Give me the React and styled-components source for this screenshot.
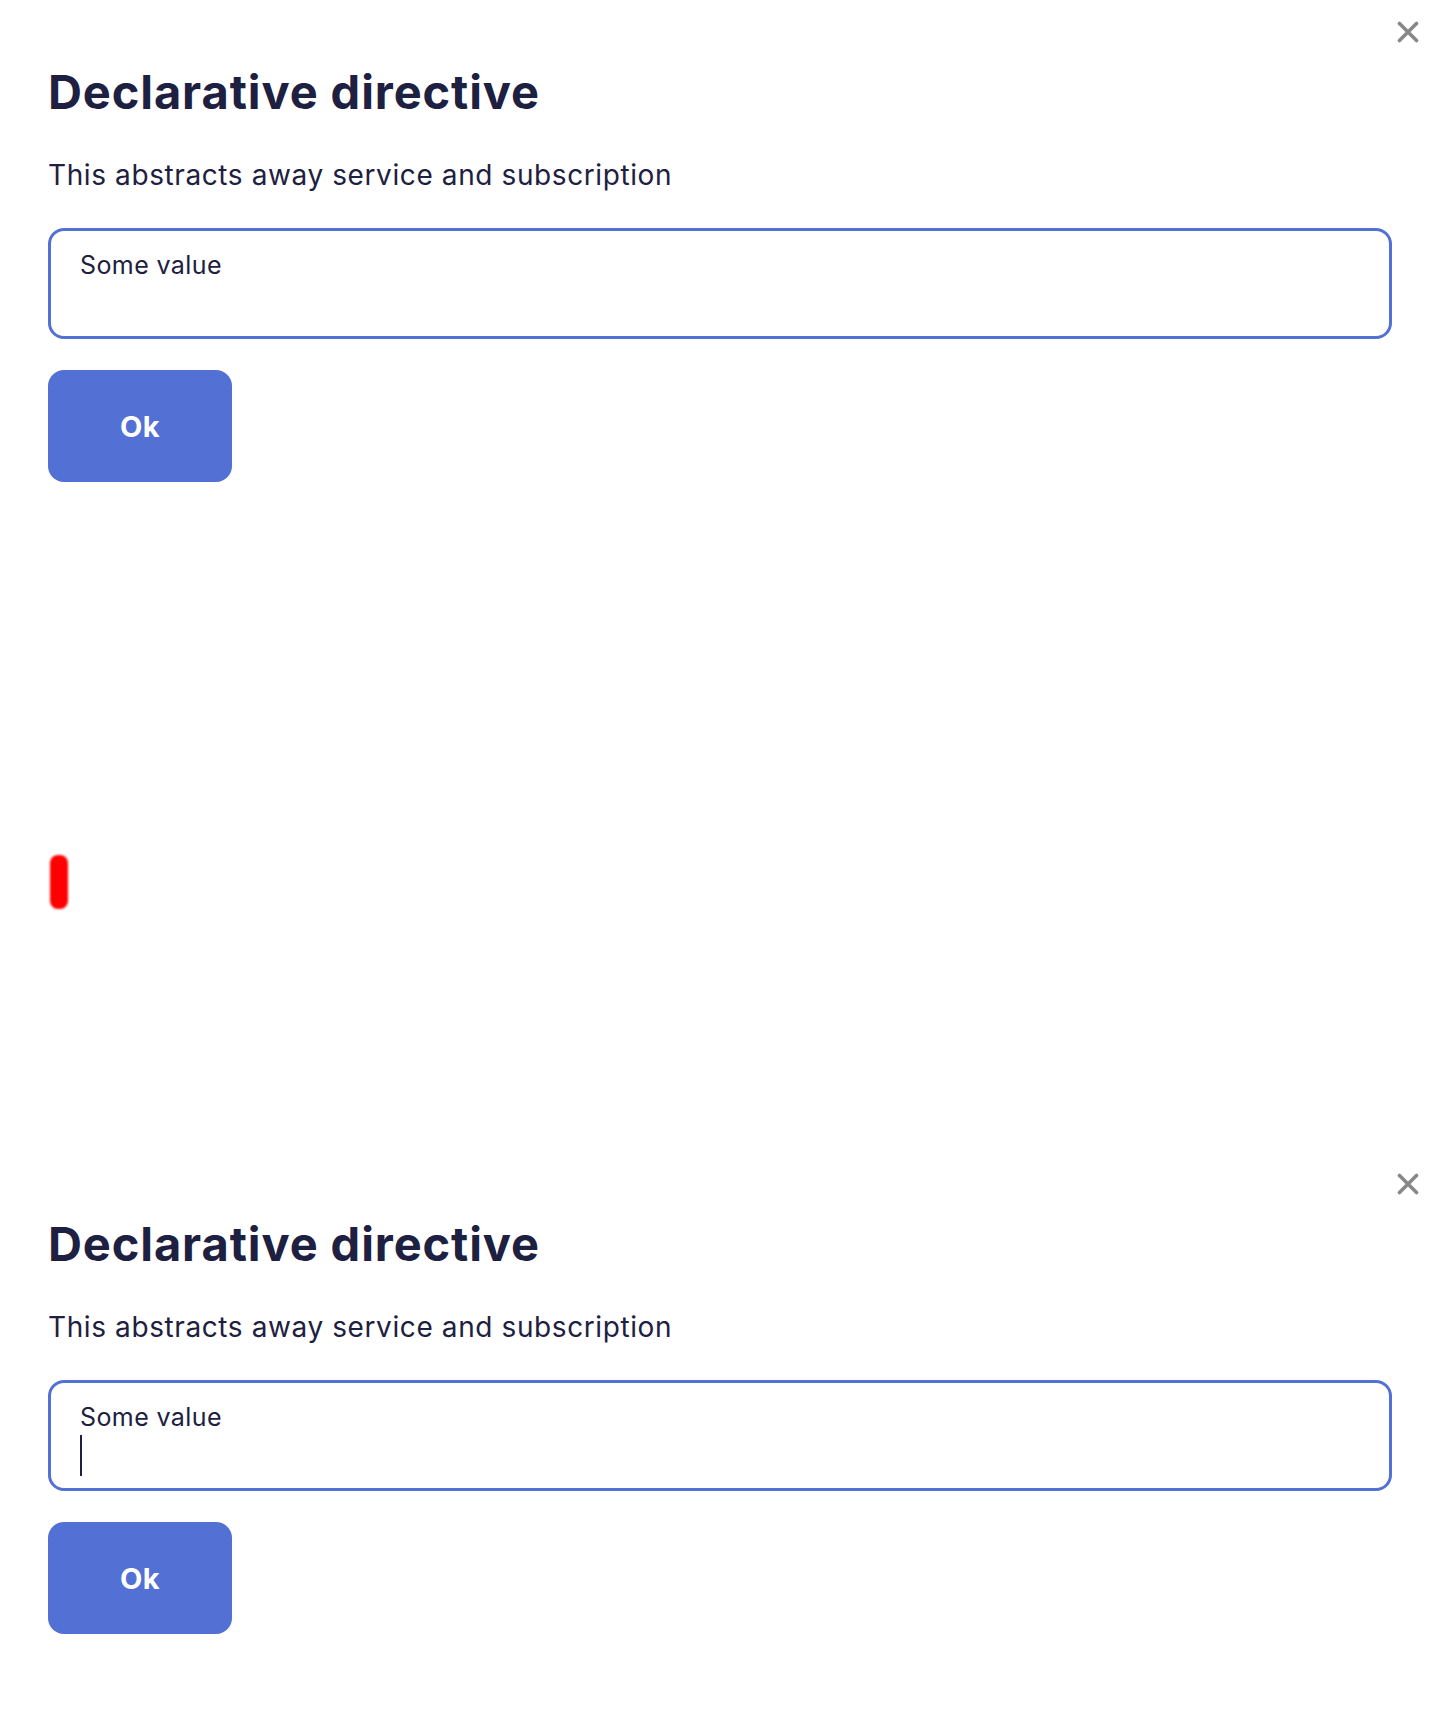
import React from "react";
import styled, { createGlobalStyle } from "styled-components";

const GlobalStyle = createGlobalStyle`
  html, body {
    margin: 0;
    padding: 0;
    background: #ffffff;
    font-family: Inter, "Noto Sans", sans-serif;
    color: #1d2040;
  }
  * { box-sizing: border-box; }
`;

const Page = styled.div`
  display: flex;
  flex-direction: column;
  width: 1440px;
  min-height: 1728px;
`;

const Dialog = styled.section`
  position: relative;
  display: flex;
  flex-direction: column;
  align-items: flex-start;
  padding: 64px 48px 0 48px;
  margin-top: ${(p) => p.$offset || 0}px;
`;

const CloseButton = styled.button`
  position: absolute;
  top: 20px;
  right: 20px;
  width: 24px;
  height: 24px;
  padding: 0;
  border: 0;
  background: transparent;
  color: #888888;
  display: flex;
  align-items: center;
  justify-content: center;
  cursor: pointer;
`;

const Title = styled.h1`
  margin: 0;
  font-family: Inter, sans-serif;
  font-weight: 700;
  font-size: 47px;
  line-height: 56px;
  letter-spacing: 0.9px;
  color: #1d2040;
`;

const Description = styled.p`
  margin: 35px 0 0;
  font-family: Inter, sans-serif;
  font-weight: 400;
  font-size: 28px;
  line-height: 40px;
  letter-spacing: 0.6px;
  color: #1d2040;
`;

const TextBox = styled.div`
  margin-top: 33px;
  align-self: stretch;
  height: 111px;
  border: 3px solid #5370d4;
  border-radius: 16px;
  padding: 14px 29px 10px;
  font-family: Inter, sans-serif;
  font-size: 25px;
  line-height: 40px;
  letter-spacing: 0.4px;
  color: #1d2040;
  display: flex;
  flex-direction: column;
`;

const Line = styled.div`
  height: 40px;
  display: flex;
  align-items: center;
`;

const Caret = styled.span`
  display: block;
  width: 2px;
  height: 41px;
  margin-top: -4px;
  background: #1d2040;
`;

const OkButton = styled.button`
  margin-top: 31px;
  width: 184px;
  height: 112px;
  border: 0;
  border-radius: 16px;
  background: #5370d4;
  color: #ffffff;
  font-family: Inter, sans-serif;
  font-weight: 700;
  font-size: 29px;
  letter-spacing: 0.3px;
  cursor: pointer;
`;

const MarkerRow = styled.div`
  margin-top: 373px;
  padding-left: 50px;
  height: 54px;
`;

const Marker = styled.div`
  width: 18px;
  height: 54px;
  border-radius: 8px;
  background: #ff0000;
  filter: blur(1.2px);
`;

function CloseIcon() {
  return (
    <svg width="22" height="22" viewBox="0 0 22 22" fill="none">
      <path d="M2.5 2.5 L19.5 19.5 M19.5 2.5 L2.5 19.5" stroke="currentColor" strokeWidth="3.6" strokeLinecap="round" />
    </svg>
  );
}

function DirectiveDialog({ offset, focused }) {
  return (
    <Dialog $offset={offset}>
      <CloseButton aria-label="Close">
        <CloseIcon />
      </CloseButton>
      <Title>Declarative directive</Title>
      <Description>This abstracts away service and subscription</Description>
      <TextBox>
        <Line>Some value</Line>
        <Line>{focused && <Caret />}</Line>
      </TextBox>
      <OkButton>Ok</OkButton>
    </Dialog>
  );
}

export default function App() {
  return (
    <>
      <GlobalStyle />
      <Page>
        <DirectiveDialog />
        <MarkerRow>
          <Marker />
        </MarkerRow>
        <DirectiveDialog offset={243} focused />
      </Page>
    </>
  );
}
